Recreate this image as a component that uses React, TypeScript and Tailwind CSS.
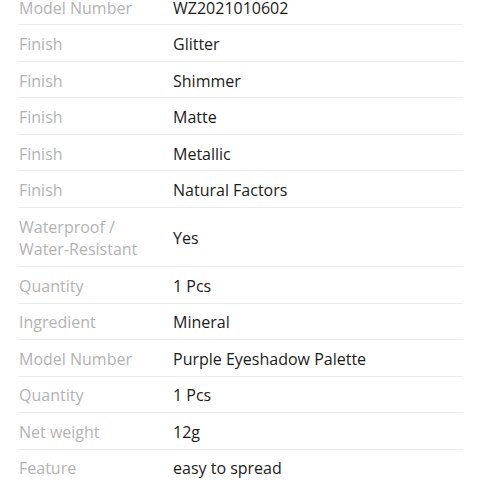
const specs: [string, string][] = [
  ['Model Number', 'WZ2021010602'],
  ['Finish', 'Glitter'],
  ['Finish', 'Shimmer'],
  ['Finish', 'Matte'],
  ['Finish', 'Metallic'],
  ['Finish', 'Natural Factors'],
  ['Waterproof / Water-Resistant', 'Yes'],
  ['Quantity', '1 Pcs'],
  ['Ingredient', 'Mineral'],
  ['Model Number', 'Purple Eyeshadow Palette'],
  ['Quantity', '1 Pcs'],
  ['Net weight', '12g'],
  ['Feature', 'easy to spread'],
];

export default function App() {
  return (
    <div className="h-[480px] w-[480px] overflow-hidden bg-white font-['Open_Sans',sans-serif]">
      <div className="mx-[18px] -mt-[11px] w-[445px]">
        {specs.map(([label, value], i) => (
          <div
            key={i}
            className="flex items-center border-b border-[#ececec] pt-[7.6px] pb-[5.2px] text-[16px] leading-[22.7px]"
          >
            <div className="w-[155px] shrink-0 pl-px pr-4 text-[#b3b3b3]">{label}</div>
            <div className="text-[#1c1c1c]">{value}</div>
          </div>
        ))}
      </div>
    </div>
  );
}
